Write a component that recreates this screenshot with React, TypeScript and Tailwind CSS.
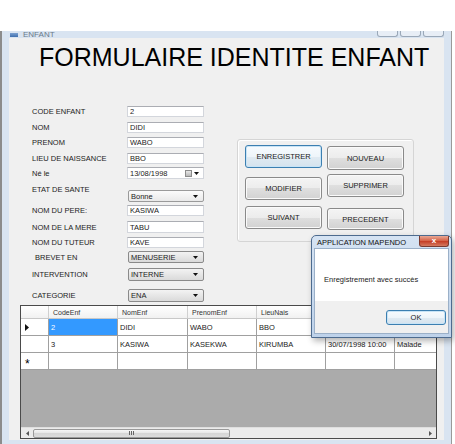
import React from 'react';

type FormRow = {
  label: string;
  kind: 'text' | 'date' | 'combo';
  value: string;
  rowClass: string;
  labelClass?: string;
  light?: boolean;
};

const formRows: FormRow[] = [
  { label: 'CODE ENFANT', kind: 'text', value: '2', rowClass: 'h-[11px]' },
  { label: 'NOM', kind: 'text', value: 'DIDI', rowClass: 'mt-[5px] h-[11px]' },
  { label: 'PRENOM', kind: 'text', value: 'WABO', rowClass: 'mt-[4px] h-[11px]' },
  { label: 'LIEU DE NAISSANCE', kind: 'text', value: 'BBO', rowClass: 'mt-[5px] h-[11px]' },
  { label: 'Né le', kind: 'date', value: '13/08/1998', rowClass: 'mt-[3px] h-[12px]' },
  {
    label: 'ETAT DE SANTE',
    kind: 'combo',
    value: 'Bonne',
    rowClass: 'mt-[11px] h-[12px]',
    labelClass: '-translate-y-[7px]',
    light: true
  },
  { label: 'NOM DU PERE:', kind: 'text', value: 'KASIWA', rowClass: 'mt-[3px] h-[11px]' },
  { label: 'NOM DE LA MERE', kind: 'text', value: 'TABU', rowClass: 'mt-[5px] h-[12px]' },
  { label: 'NOM DU TUTEUR', kind: 'text', value: 'KAVE', rowClass: 'mt-[4px] h-[11px]' },
  { label: 'BREVET EN', kind: 'combo', value: 'MENUSERIE', rowClass: 'mt-[3px] h-[12px]', labelClass: 'pl-[3px]' },
  { label: 'INTERVENTION', kind: 'combo', value: 'INTERNE', rowClass: 'mt-[5px] h-[13px]' },
  { label: 'CATEGORIE', kind: 'combo', value: 'ENA', rowClass: 'mt-[8px] h-[13px]' }
];

// the last two headers sit under the message box
const columns = [
  { name: 'CodeEnf', w: 'w-[69px]' },
  { name: 'NomEnf', w: 'w-[70px]' },
  { name: 'PrenomEnf', w: 'w-[69px]' },
  { name: 'LieuNais', w: 'w-[69px]' },
  { name: '', w: 'w-[69px]' },
  { name: '', w: 'w-[60px]' }
];

const tableRows = [
  ['2', 'DIDI', 'WABO', 'BBO', '', ''],
  ['3', 'KASIWA', 'KASEKWA', 'KIRUMBA', '30/07/1998 10:00', 'Malade'],
  ['', '', '', '', '', '']
];

const DownArrow: React.FC = () => (
  <svg width="5" height="3" viewBox="0 0 5 3">
    <path d="M0 0h5L2.5 3z" fill="#111" />
  </svg>
);

const Control: React.FC<{ row: FormRow }> = ({ row }) => {
  if (row.kind === 'combo') {
    const bg = row.light
      ? 'bg-[linear-gradient(#fbfbfb,#e9e9e9)] border-[#9a9a9a]'
      : 'bg-[linear-gradient(#f3f3f3,#dadada)] border-[#8a8a8a]';
    return (
      <div
        className={`ml-[1px] w-[76px] h-full rounded-[2px] border ${bg} flex items-center justify-between pl-[2px] pr-[5px]`}
      >
        <span>{row.value}</span>
        <DownArrow />
      </div>
    );
  }
  return (
    <div className="w-[77px] h-full bg-white border border-[#d3d6dc] border-t-[#abadb3] flex items-center pl-[2px]">
      <span className="flex-1">{row.value}</span>
      {row.kind === 'date' && (
        <div className="flex items-center gap-[2px] pr-[4px]">
          <div className="w-[7px] h-[7px] border border-[#8c8c8c] bg-[linear-gradient(#e8e8e8,#b8b8b8)]" />
          <DownArrow />
        </div>
      )}
    </div>
  );
};

const WinButton: React.FC<{ text: string; cls: string; focused?: boolean }> = ({ text, cls, focused }) => (
  <div
    className={`w-[77px] ${cls} rounded-[3px] border flex items-center justify-center text-[#1a1a1a] ${
      focused
        ? 'border-[#3c7fb1] bg-[linear-gradient(#f7fbfe,#eef5fa_50%,#e1ebf2_50%,#d5e3ee)] shadow-[inset_0_0_0_1px_#c8e4f6]'
        : 'border-[#8a8a8a] bg-[linear-gradient(#f4f4f4,#ececec_50%,#dfdfdf_50%,#d2d2d2)] shadow-[inset_0_0_0_1px_#fafafa]'
    }`}
  >
    {text}
  </div>
);

const DataGrid: React.FC = () => (
  <div className="ml-[11px] mt-[3px] w-[417px] h-[134px] border border-[#4a4a4a] flex flex-col overflow-hidden bg-[#ababab]">
    <div className="h-[13px] flex shrink-0 bg-[linear-gradient(#ffffff,#f1f1f1)] border-b border-[#c8c8c8] text-[7px] text-[#333]">
      <div className="w-[28px] shrink-0 border-r border-[#d0d0d0]" />
      {columns.map((c, j) => (
        <div key={j} className={`${c.w} shrink-0 border-r border-[#d0d0d0] flex items-center pl-[4px]`}>
          {c.name}
        </div>
      ))}
    </div>
    {tableRows.map((r, i) => (
      <div key={i} className="h-[17px] flex shrink-0 bg-white border-b border-[#a0a0a0]">
        <div className="w-[28px] shrink-0 border-r border-[#a0a0a0] flex items-center pl-[4px]">
          {i === 0 && (
            <svg width="4" height="7" viewBox="0 0 4 7">
              <path d="M0 0l4 3.5L0 7z" fill="#111" />
            </svg>
          )}
          {i === 2 && <span className="text-[12px] leading-none pt-[6px] text-black">*</span>}
        </div>
        {r.map((v, j) => (
          <div
            key={j}
            className={`${columns[j].w} shrink-0 border-r border-[#a0a0a0] flex items-center pl-[2px] whitespace-nowrap overflow-hidden ${
              i === 0 && j === 0 ? 'bg-[#3399ff] text-white' : ''
            }`}
          >
            {v}
          </div>
        ))}
      </div>
    ))}
    <div className="flex-1" />
    <div className="h-[11px] shrink-0 flex items-center bg-[#ebebeb] border-t border-[#dedede]">
      <div className="w-[12px] h-full flex items-center justify-center">
        <svg width="3" height="5" viewBox="0 0 3 5">
          <path d="M3 0v5L0 2.5z" fill="#555" />
        </svg>
      </div>
      <div className="w-[197px] h-[9px] rounded-[2px] border border-[#9a9a9a] bg-[linear-gradient(#f6f6f6,#e4e4e4_50%,#d6d6d6_50%,#dcdcdc)] flex items-center justify-center gap-[1px]">
        <div className="w-px h-[4px] bg-[#666]" />
        <div className="w-px h-[4px] bg-[#666]" />
        <div className="w-px h-[4px] bg-[#666]" />
      </div>
      <div className="flex-1" />
      <div className="w-[12px] h-full flex items-center justify-center">
        <svg width="3" height="5" viewBox="0 0 3 5">
          <path d="M0 0v5L3 2.5z" fill="#555" />
        </svg>
      </div>
    </div>
  </div>
);

const MessageBox: React.FC = () => (
  <div className="absolute left-[311px] top-[235px] w-[141px] h-[103px] flex flex-col rounded-t-[5px] border border-[#4d6b8f] bg-[linear-gradient(#d5e3f3,#bed2ea)] shadow-[2px_3px_6px_rgba(0,0,0,0.3)]">
    <div className="h-[12px] shrink-0 relative flex items-center">
      <span className="pl-[5px] text-[7.5px] text-[#111]">APPLICATION MAPENDO</span>
      <div className="absolute right-[2px] top-0 w-[30px] h-[11px] rounded-b-[3px] border border-t-0 border-[#7a3a30] bg-[linear-gradient(#e9a895,#d45f44_50%,#c43a22_50%,#d47a60)] flex items-center justify-center text-white text-[8px] font-bold leading-none">
        x
      </div>
    </div>
    <div className="mx-[2px] flex-1 flex flex-col border border-[#9bb0c8]">
      <div className="h-[52px] shrink-0 bg-white flex items-center pl-[9px] pt-[8px] text-[7.5px]">
        Enregistrement avec succès
      </div>
      <div className="flex-1 bg-[#f0f0f0] flex justify-end items-start pr-[2px] pt-[9px]">
        <div className="w-[60px] h-[15px] rounded-[3px] border border-[#3c7fb1] bg-[linear-gradient(#f7fbfe,#eef5fa_50%,#e1ebf2_50%,#d5e3ee)] shadow-[inset_0_0_0_1px_#c8e4f6] flex items-center justify-center text-[7.5px]">
          OK
        </div>
      </div>
    </div>
    <div className="h-[3px] shrink-0" />
  </div>
);

const App: React.FC = () => {
  return (
    <div className="w-[455px] h-[444px] bg-white relative overflow-hidden font-['Liberation_Sans',Arial,sans-serif] text-[7.5px] leading-[9px] text-[#222]">
      <div className="h-[31px]" />
      <div className="w-[452px] h-[413px] bg-[#d9e4f1] border-l-2 border-l-[#8c8c8c] border-r border-r-[#9a9a9a] flex flex-col">
        {/* title bar, only its lower edge is in the picture */}
        <div className="h-[7px] shrink-0 flex items-end overflow-hidden">
          <div className="ml-[8px] w-[8px] h-[4px] bg-[linear-gradient(#7aa0d0,#3f6fae)] mb-[1px]" />
          <span className="ml-[5px] text-[8px] leading-[10px] text-[#6b7a8a] -mb-[2px]">ENFANT</span>
          <div className="ml-auto mr-[7px] flex gap-[2px] h-[6px] self-end mb-[1px]">
            <div className="w-[21px] h-full rounded-b-[3px] border border-t-0 border-[#9aa8b8] bg-[#e8eef6]" />
            <div className="w-[21px] h-full rounded-b-[3px] border border-t-0 border-[#9aa8b8] bg-[#e8eef6]" />
            <div className="w-[21px] h-full rounded-b-[3px] border border-t-0 border-[#9aa8b8] bg-[#e8eef6]" />
          </div>
        </div>
        <div className="ml-[7px] w-[435px] h-[402px] shrink-0 bg-[#f0f0f0] flex flex-col">
          <h1 className="mt-[7px] ml-[30px] text-[25px] leading-[25px] text-black whitespace-nowrap">
            FORMULAIRE IDENTITE ENFANT
          </h1>
          <div className="flex mt-[36px]">
            <div className="ml-[23px] w-[173px] flex flex-col">
              {formRows.map((r) => (
                <div key={r.label} className={`flex items-center ${r.rowClass}`}>
                  <span className={`w-[95px] shrink-0 whitespace-nowrap ${r.labelClass ?? ''}`}>{r.label}</span>
                  <Control row={r} />
                </div>
              ))}
            </div>
            <div className="ml-[32px] mt-[33px] w-[177px] h-[103px] rounded-[3px] border border-[#d5d5d5] shadow-[inset_1px_1px_0_#ffffff] flex">
              <div className="ml-[7px] flex flex-col">
                <div className="mt-[5px]">
                  <WinButton text="ENREGISTRER" cls="h-[23px]" focused />
                </div>
                <div className="mt-[9px]">
                  <WinButton text="MODIFIER" cls="h-[23px]" />
                </div>
                <div className="mt-[6px]">
                  <WinButton text="SUIVANT" cls="h-[23px]" />
                </div>
              </div>
              <div className="ml-[5px] flex flex-col">
                <div className="mt-[6px]">
                  <WinButton text="NOUVEAU" cls="h-[24px]" />
                </div>
                <div className="mt-[4px]">
                  <WinButton text="SUPPRIMER" cls="h-[23px]" />
                </div>
                <div className="mt-[11px]">
                  <WinButton text="PRECEDENT" cls="h-[22px]" />
                </div>
              </div>
            </div>
          </div>
          <DataGrid />
        </div>
      </div>
      <MessageBox />
    </div>
  );
};

export default App;
